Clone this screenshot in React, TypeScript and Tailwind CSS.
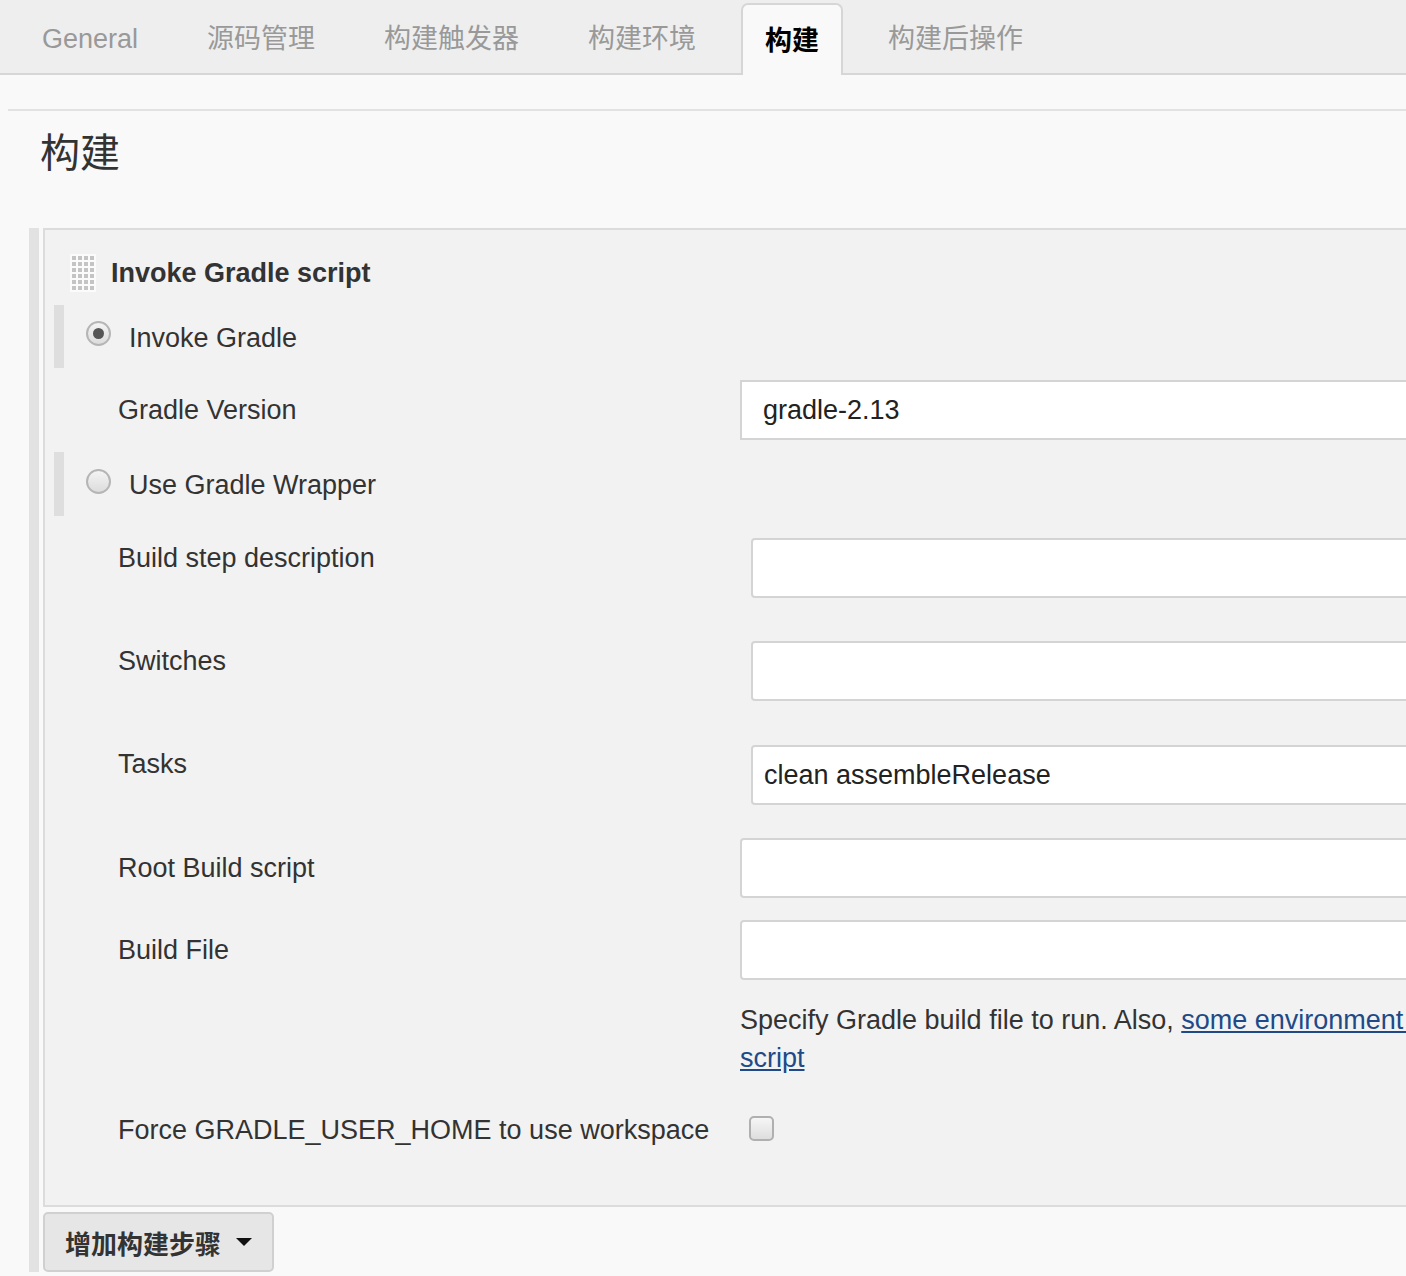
import React from "react";

const SANS = "font-['Liberation_Sans','Noto_Sans_CJK_SC',sans-serif]";

function Handle() {
  const dots: React.ReactElement[] = [];
  for (let r = 0; r < 6; r++) {
    for (let c = 0; c < 4; c++) {
      dots.push(<rect key={`${r}-${c}`} x={2 + c * 6} y={2 + r * 6} width={4} height={4} fill="#c4c4c4" />);
    }
  }
  return (
    <svg width="26" height="38" viewBox="0 0 26 38" className="shrink-0">
      <rect x="0" y="0" width="26" height="38" fill="#fbfbfb" />
      {dots}
    </svg>
  );
}

function Radio({ checked }: { checked?: boolean }) {
  return (
    <span className="relative inline-flex h-[25px] w-[25px] shrink-0 items-center justify-center rounded-full border-2 border-[#b5b5b5] bg-gradient-to-b from-[#f4f4f4] to-[#dcdcdc]">
      {checked && <span className="h-[11px] w-[11px] rounded-full bg-[#555]" />}
    </span>
  );
}

function Input({ value }: { value?: string }) {
  return (
    <div className="flex h-[60px] w-[900px] shrink-0 items-center rounded-[4px] border-2 border-[#d4d4d4] bg-white pl-[11px] text-[27px] text-[#222]">
      {value}
    </div>
  );
}

export default function App() {
  const tabs = ["General", "源码管理", "构建触发器", "构建环境", "构建", "构建后操作"];
  return (
    <div className={`h-[1276px] w-full overflow-hidden bg-[#f9f9f9] ${SANS} text-[#333]`}>
      <div className="w-[2000px]">
        {/* tab bar */}
        <div className="relative h-[75px] border-b-2 border-[#d6d6d6] bg-[#eeeeee]">
          <div className="flex h-full items-end gap-[21px] pl-[18px]">
            {tabs.map((t) =>
              t === "构建" ? (
                <div
                  key={t}
                  className="relative -mb-[2px] flex h-[72px] items-center rounded-t-[7px] border-2 border-b-0 border-[#d6d6d6] bg-[#f9f9f9] px-[22px] pt-[2px] text-[27px] font-bold text-black"
                >
                  {t}
                </div>
              ) : (
                <div key={t} className="flex h-[73px] items-center px-[24px] pt-[6px] text-[27px] text-[#999]">
                  {t}
                </div>
              )
            )}
          </div>
        </div>

        <div className="ml-[8px] mt-[34px] border-t-2 border-[#e2e2e2]" />

        <h1 className="ml-[40px] mt-[17px] h-[45px] text-[40px] leading-[45px] font-normal text-[#333] font-['Noto_Sans_CJK_SC',serif]">
          构建
        </h1>

        {/* build step wrapper */}
        <div className="ml-[29px] mt-[55px] border-l-[10px] border-[#e2e2e2] pl-[4px]">
          <div className="border-l-2 border-t-2 border-b-2 border-[#dcdcdc] bg-[#f2f2f2] pb-[55px]">
            {/* title */}
            <div className="mt-[20px] flex h-[46px] items-center pl-[25px]">
              <Handle />
              <span className="ml-[15px] text-[27px] font-bold text-[#333]">Invoke Gradle script</span>
            </div>

            {/* radio 1 */}
            <div className="ml-[9px] mt-[9px] flex h-[63px] items-center border-l-[10px] border-[#dedede]">
              <span className="ml-[22px] -mt-[6px] flex"><Radio checked /></span>
              <span className="ml-[18px] mt-[3px] text-[27px]">Invoke Gradle</span>
            </div>

            {/* gradle version */}
            <div className="mt-[12px] flex h-[60px] items-center">
              <span className="ml-[73px] w-[622px] shrink-0 text-[27px]">Gradle Version</span>
              <div className="flex h-[60px] w-[900px] shrink-0 items-center border-2 border-[#d4d4d4] bg-white pl-[21px] text-[27px] text-[#222]">
                gradle-2.13
              </div>
            </div>

            {/* radio 2 */}
            <div className="ml-[9px] mt-[12px] flex h-[64px] items-center border-l-[10px] border-[#dedede]">
              <span className="ml-[22px] -mt-[6px] flex"><Radio /></span>
              <span className="ml-[18px] mt-[3px] text-[27px]">Use Gradle Wrapper</span>
            </div>

            {/* build step description */}
            <div className="mt-[22px] flex h-[60px] items-start">
              <span className="ml-[73px] w-[633px] shrink-0 pt-[4px] text-[27px] leading-[32px]">Build step description</span>
              <Input />
            </div>
            <div className="mt-[43px] flex h-[60px] items-start">
              <span className="ml-[73px] w-[633px] shrink-0 pt-[4px] text-[27px] leading-[32px]">Switches</span>
              <Input />
            </div>
            <div className="mt-[44px] flex h-[60px] items-start">
              <span className="ml-[73px] w-[633px] shrink-0 pt-[3px] text-[27px] leading-[32px]">Tasks</span>
              <Input value="clean assembleRelease" />
            </div>

            <div className="mt-[33px] flex h-[60px] items-center">
              <span className="ml-[73px] w-[622px] shrink-0 text-[27px]">Root Build script</span>
              <Input />
            </div>
            <div className="mt-[22px] flex h-[60px] items-center">
              <span className="ml-[73px] w-[622px] shrink-0 text-[27px]">Build File</span>
              <Input />
            </div>

            <div className="ml-[695px] mt-[21px] text-[27px] leading-[38px] text-[#333]">
              <div className="whitespace-nowrap">
                Specify Gradle build file to run. Also,{" "}
                <a className="text-[#204a87] underline">some environment variables are available to the build</a>
              </div>
              <div>
                <a className="text-[#204a87] underline">script</a>
              </div>
            </div>

            <div className="mt-[33px] flex h-[40px] items-center">
              <span className="ml-[73px] w-[631px] shrink-0 whitespace-nowrap text-[27px]">Force GRADLE_USER_HOME to use workspace</span>
              <span className="h-[25px] w-[25px] shrink-0 rounded-[5px] border-2 border-[#b0b0b0] bg-gradient-to-b from-[#f6f6f6] to-[#dedede] -mt-[4px]" />
            </div>
          </div>

          {/* add build step button */}
          <div className="mt-[5px] flex h-[60px] w-[231px] items-center rounded-[5px] border-2 border-[#d0d0d0] bg-[#e6e6e6] pl-[20px]">
            <span className="text-[26px] font-bold text-[#333] font-['Noto_Sans_CJK_SC',sans-serif]">增加构建步骤</span>
            <svg width="18" height="10" viewBox="0 0 18 10" className="ml-[14px]">
              <polygon points="1,1 17,1 9,9" fill="#111" />
            </svg>
          </div>
        </div>
      </div>
    </div>
  );
}
